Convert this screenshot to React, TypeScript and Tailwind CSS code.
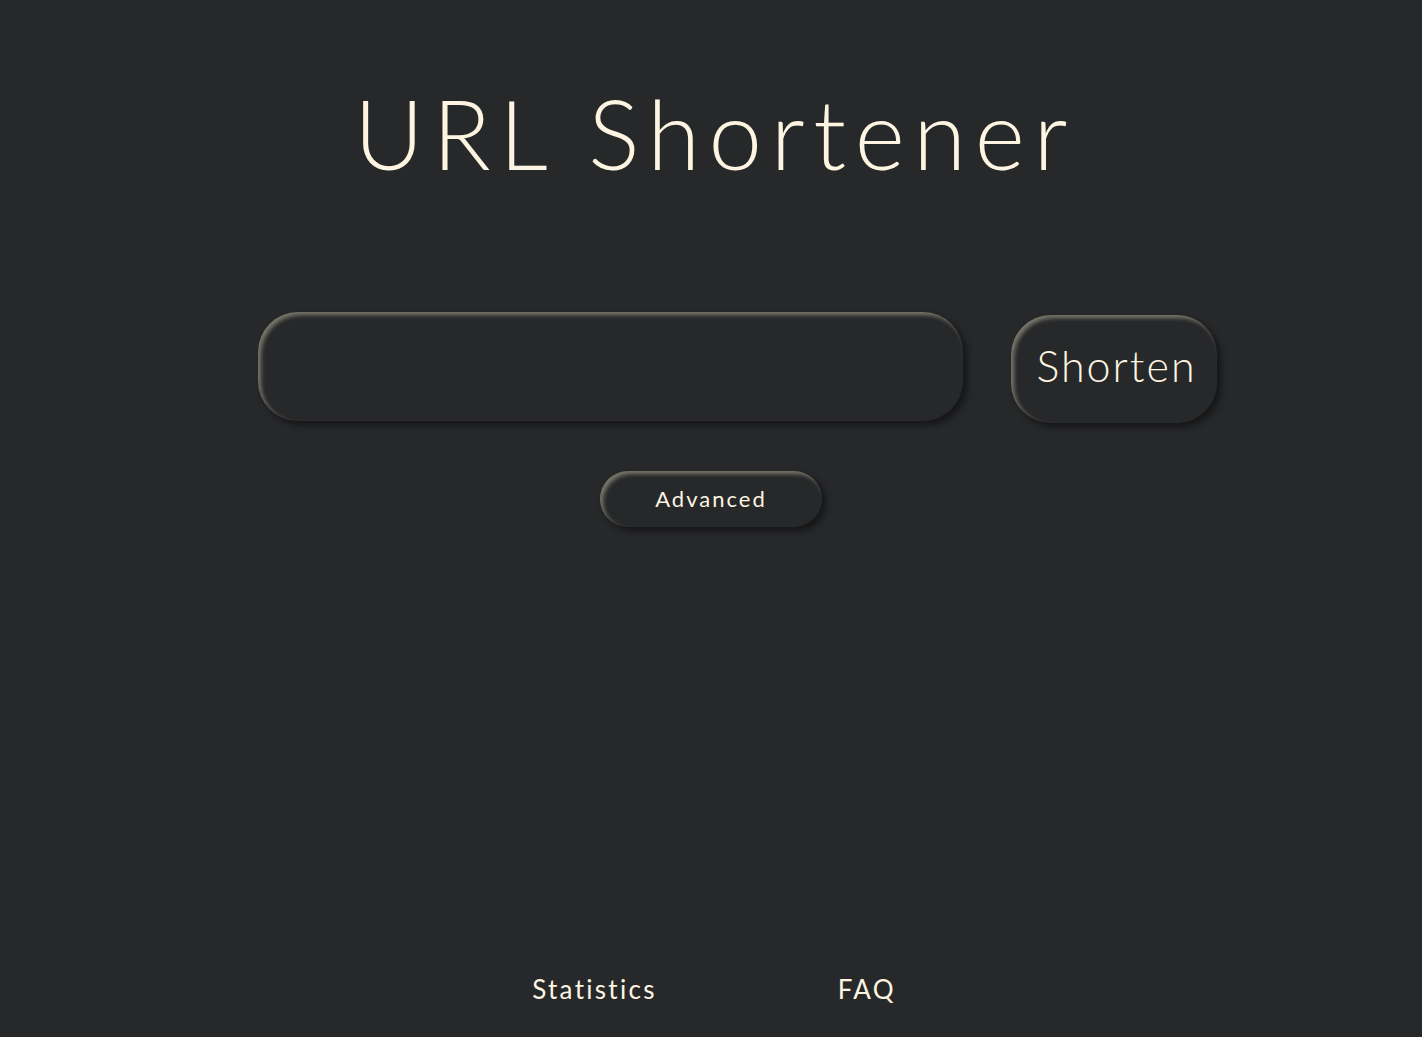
import React from "react";

export default function App() {
  return (
    <div
      className="h-[1037px] w-full bg-[#27282a] flex flex-col items-center text-[#fdf5e2] overflow-hidden"
      style={{ fontFamily: "Lato, 'DejaVu Sans', sans-serif" }}
    >
      <h1 className="mt-[78px] pl-[8px] text-[96px] leading-[110px] font-light tracking-[8.6px]">URL Shortener</h1>
      <div className="mt-[124px] ml-[52px] flex items-start gap-[48px]">
        <input
          className="w-[705px] h-[109px] rounded-[40px] bg-[#27282a] outline-none px-8 text-[32px] text-[#fdf5e2] shadow-[inset_3px_3px_4px_rgba(190,185,160,0.55),4px_4px_6px_rgba(10,10,10,0.6)]"
        />
        <button className="mt-[3px] w-[206px] h-[108px] rounded-[40px] bg-[#27282a] text-[43px] font-light tracking-[2px] pl-[6px] pb-[6px] shadow-[inset_3px_3px_4px_rgba(190,185,160,0.55),4px_4px_6px_rgba(10,10,10,0.6)]">
          Shorten
        </button>
      </div>
      <button className="mt-[48px] w-[222px] h-[56px] rounded-[28px] bg-[#27282a] text-[22px] tracking-[2px] pb-[2px] shadow-[inset_3px_3px_4px_rgba(190,185,160,0.55),4px_4px_6px_rgba(10,10,10,0.6)]">
        Advanced
      </button>
      <div className="mt-auto mb-[28px] ml-[6px] flex gap-[181px] text-[26px] tracking-[2.3px]">
        <a>Statistics</a>
        <a>FAQ</a>
      </div>
    </div>
  );
}
